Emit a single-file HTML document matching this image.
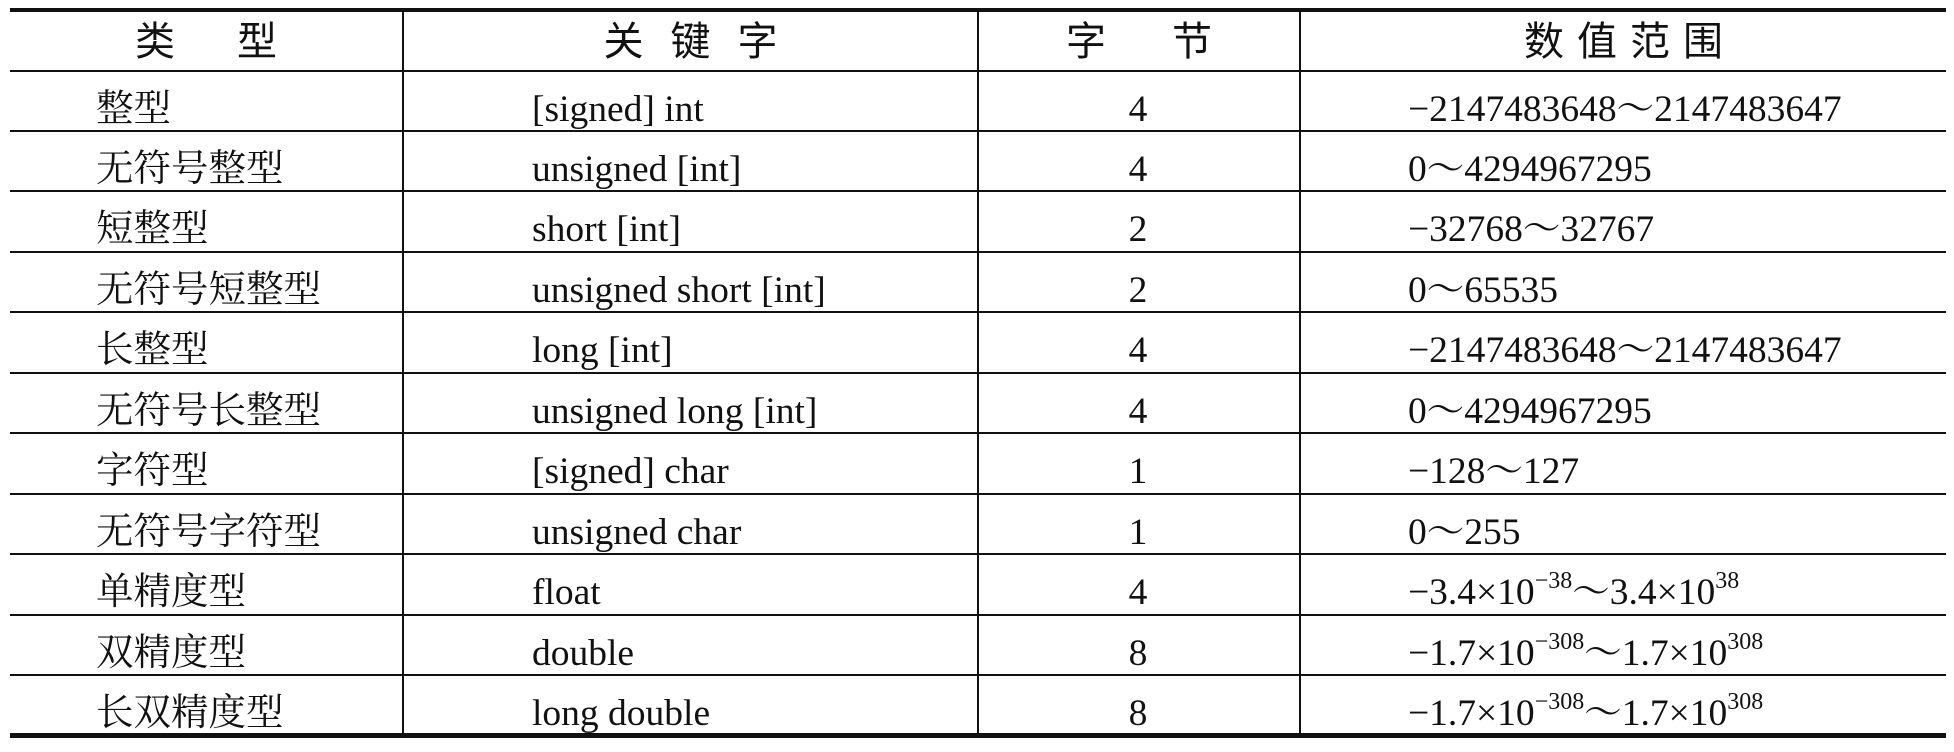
<!DOCTYPE html>
<html><head><meta charset="utf-8"><style>
body{margin:0;width:1954px;height:745px;background:#fff;position:relative;overflow:hidden;font-family:"Liberation Serif","Noto Serif CJK SC",serif;color:#111}
.h{position:absolute;left:10px;width:1936px;background:#111}
.v{position:absolute;top:12px;height:722px;width:2px;background:#111}
.r{position:absolute;height:60px;line-height:76px;font-size:37.5px;white-space:nowrap}
.c0{left:96px}.c1{left:532px}.c2{left:1110px;width:56px;text-align:center}.c3{left:1408px}
.hd{position:absolute;top:10px;height:61px;line-height:64px;font-size:40px;font-family:"Liberation Sans","Noto Sans CJK SC",sans-serif;text-align:center}
sup{font-size:24px;vertical-align:16px;line-height:0}
</style></head><body>
<div class="h" style="top:8px;height:4px"></div>
<div class="h" style="top:70px;height:2px"></div>
<div class="h" style="top:130px;height:2px"></div>
<div class="h" style="top:190px;height:2px"></div>
<div class="h" style="top:251px;height:2px"></div>
<div class="h" style="top:311px;height:2px"></div>
<div class="h" style="top:372px;height:2px"></div>
<div class="h" style="top:432px;height:2px"></div>
<div class="h" style="top:493px;height:2px"></div>
<div class="h" style="top:553px;height:2px"></div>
<div class="h" style="top:614px;height:2px"></div>
<div class="h" style="top:674px;height:2px"></div>
<div class="h" style="top:733px;height:5px"></div>
<div class="v" style="left:402px"></div>
<div class="v" style="left:977px"></div>
<div class="v" style="left:1299px"></div>
<div class="hd" style="left:10px;width:392px"><span>类</span><span style="margin-left:62px">型</span></div>
<div class="hd" style="left:404px;width:573px;letter-spacing:27px;text-indent:27px">关键字</div>
<div class="hd" style="left:979px;width:320px"><span>字</span><span style="margin-left:66px">节</span></div>
<div class="hd" style="left:1301px;width:645px;letter-spacing:13px;text-indent:13px">数值范围</div>
<div class="r c0" style="top:72px">整型</div><div class="r c1" style="top:72px">[signed] int</div><div class="r c2" style="top:72px">4</div><div class="r c3" style="top:72px">−2147483648～2147483647</div>
<div class="r c0" style="top:132px">无符号整型</div><div class="r c1" style="top:132px">unsigned [int]</div><div class="r c2" style="top:132px">4</div><div class="r c3" style="top:132px">0～4294967295</div>
<div class="r c0" style="top:192px">短整型</div><div class="r c1" style="top:192px">short [int]</div><div class="r c2" style="top:192px">2</div><div class="r c3" style="top:192px">−32768～32767</div>
<div class="r c0" style="top:253px">无符号短整型</div><div class="r c1" style="top:253px">unsigned short [int]</div><div class="r c2" style="top:253px">2</div><div class="r c3" style="top:253px">0～65535</div>
<div class="r c0" style="top:313px">长整型</div><div class="r c1" style="top:313px">long [int]</div><div class="r c2" style="top:313px">4</div><div class="r c3" style="top:313px">−2147483648～2147483647</div>
<div class="r c0" style="top:374px">无符号长整型</div><div class="r c1" style="top:374px">unsigned long [int]</div><div class="r c2" style="top:374px">4</div><div class="r c3" style="top:374px">0～4294967295</div>
<div class="r c0" style="top:434px">字符型</div><div class="r c1" style="top:434px">[signed] char</div><div class="r c2" style="top:434px">1</div><div class="r c3" style="top:434px">−128～127</div>
<div class="r c0" style="top:495px">无符号字符型</div><div class="r c1" style="top:495px">unsigned char</div><div class="r c2" style="top:495px">1</div><div class="r c3" style="top:495px">0～255</div>
<div class="r c0" style="top:555px">单精度型</div><div class="r c1" style="top:555px">float</div><div class="r c2" style="top:555px">4</div><div class="r c3" style="top:555px">−3.4×10<sup>−38</sup>～3.4×10<sup>38</sup></div>
<div class="r c0" style="top:616px">双精度型</div><div class="r c1" style="top:616px">double</div><div class="r c2" style="top:616px">8</div><div class="r c3" style="top:616px">−1.7×10<sup>−308</sup>～1.7×10<sup>308</sup></div>
<div class="r c0" style="top:676px">长双精度型</div><div class="r c1" style="top:676px">long double</div><div class="r c2" style="top:676px">8</div><div class="r c3" style="top:676px">−1.7×10<sup>−308</sup>～1.7×10<sup>308</sup></div>
</body></html>
